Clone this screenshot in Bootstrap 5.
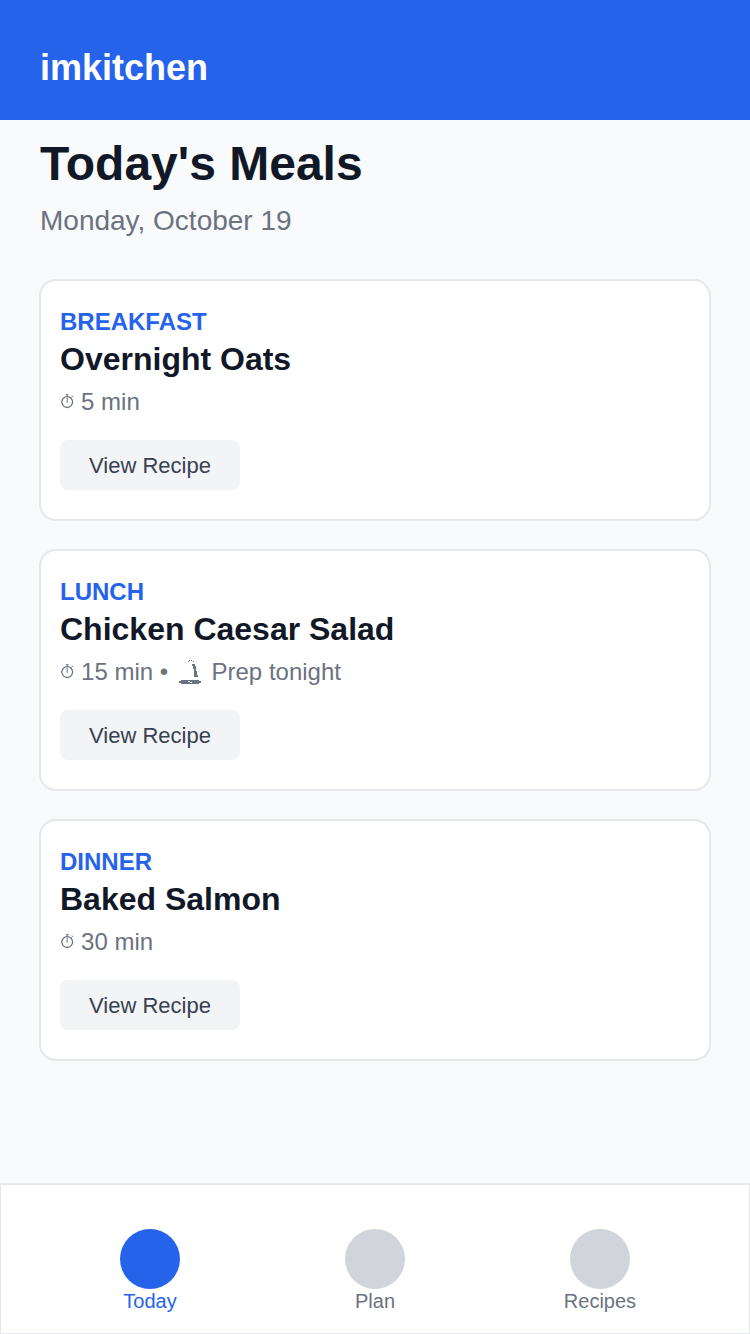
<!DOCTYPE html>
<html lang="en">
<head>
<meta charset="utf-8">
<meta name="viewport" content="width=device-width, initial-scale=1">
<title>imkitchen</title>
<link href="https://cdn.jsdelivr.net/npm/bootstrap@5.3.0/dist/css/bootstrap.min.css" rel="stylesheet">
<style>
body{font-family:"Liberation Sans",Arial,sans-serif;background:#f9fafb;color:#111827;height:1334px;overflow:hidden}
.app-bar{height:120px;background:#2563eb;padding:48px 40px 0}
.app-bar .navbar-brand{font-size:36px;line-height:40px;color:#fff}
main{padding:17px 39px 0}
.page-head{padding-left:1px;height:142px}
.page-head h1{font-size:48px;line-height:54px;margin-bottom:13px}
.page-head p{font-size:28px;line-height:34px;color:#6b7280}
.meals{gap:28px}
.meal{height:242px;border:2px solid #e5e7eb;border-radius:17px;padding:27px 19px 0;background:#fff}
.slot{font-size:24px;line-height:28px;color:#2563eb}
.meal h2{font-size:32px;line-height:46px}
.meta{font-size:24px;line-height:40px;height:40px;color:#6b7280;white-space:pre}
.meta svg{height:30px;vertical-align:top;margin-top:4px}
.clock{width:14.4px}
.bell{width:30px}
.btn-recipe{width:180px;height:50px;margin-top:18px;padding:1px 0 0;border:0;border-radius:8px;background:#f3f4f6;color:#374151;font-size:22px;line-height:50px}
.tabs{height:151px;background:#fff;border:1px solid #e5e7eb;border-top-width:2px;padding:44px 36.5px 0}
.tabs a{color:#6b7280;font-size:20px;line-height:24px}
.tabs a.active{color:#2563eb}
.dot{width:60px;height:60px;background:#d1d5db}
.active .dot{background:#2563eb}
</style>
</head>
<body class="d-flex flex-column">
<svg width="0" height="0" class="position-absolute" aria-hidden="true">
  <symbol id="clock" viewBox="0 0 14.4 30"><g fill="none" stroke="currentColor"><circle cx="7.2" cy="16.1" r="5.4" stroke-width="1.3"/><path d="M5.8 8.7h2.8M7.2 8.7v2" stroke-width="1"/><path d="M7.2 11.8v5" stroke-width="1"/><path d="M11.2 11.7l1.5-1.5M11.9 9.5l1.3 1.3" stroke-width=".8"/></g></symbol>
  <symbol id="bell" viewBox="-1 0 30 30"><path fill="currentColor" shape-rendering="crispEdges" d="M13 4h1v1h-1zM15 4h1v1h-1zM12 5h1v1h-1zM17 5h1v1h-1zM17 8h2v2h1v5h1v4h1v2h-4v-8h-1v-3h-1V8zM5 24h18v1h2v2h-2v1H5v-1H3v-2h2zM12 25v1h2v1h2v-1h-2v-1z" fill-rule="evenodd"/></symbol>
</svg>
<header class="app-bar"><span class="navbar-brand fw-bold d-block p-0 m-0">imkitchen</span></header>
<main class="flex-grow-1">
  <div class="page-head"><h1 class="fw-bold">Today's Meals</h1><p class="m-0">Monday, October 19</p></div>
  <div class="meals d-flex flex-column">
    <section class="card meal"><div class="slot fw-bold">BREAKFAST</div><h2 class="fw-bold m-0">Overnight Oats</h2><div class="meta"><svg class="clock"><use href="#clock"/></svg> 5 min</div><a class="btn btn-recipe" href="#">View Recipe</a></section>
    <section class="card meal"><div class="slot fw-bold">LUNCH</div><h2 class="fw-bold m-0">Chicken Caesar Salad</h2><div class="meta"><svg class="clock"><use href="#clock"/></svg> 15 min • <svg class="bell"><use href="#bell"/></svg> Prep tonight</div><a class="btn btn-recipe" href="#">View Recipe</a></section>
    <section class="card meal"><div class="slot fw-bold">DINNER</div><h2 class="fw-bold m-0">Baked Salmon</h2><div class="meta"><svg class="clock"><use href="#clock"/></svg> 30 min</div><a class="btn btn-recipe" href="#">View Recipe</a></section>
  </div>
</main>
<nav class="tabs d-flex flex-shrink-0">
  <a class="active flex-fill w-100 d-flex flex-column align-items-center text-decoration-none" href="#"><span class="dot rounded-circle"></span>Today</a>
  <a class="flex-fill w-100 d-flex flex-column align-items-center text-decoration-none" href="#"><span class="dot rounded-circle"></span>Plan</a>
  <a class="flex-fill w-100 d-flex flex-column align-items-center text-decoration-none" href="#"><span class="dot rounded-circle"></span>Recipes</a>
</nav>
<script src="https://cdn.jsdelivr.net/npm/bootstrap@5.3.0/dist/js/bootstrap.bundle.min.js"></script>
</body>
</html>
